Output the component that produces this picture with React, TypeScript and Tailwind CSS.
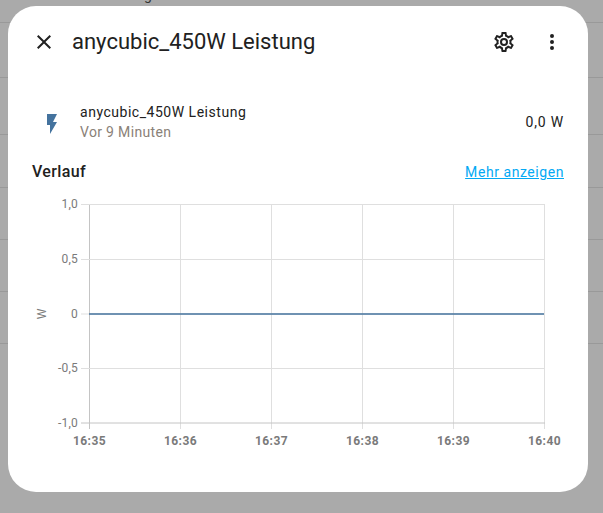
const closePath =
  "M19,6.41L17.59,5L12,10.59L6.41,5L5,6.41L10.59,12L5,17.59L6.41,19L12,13.41L17.59,19L19,17.59L13.41,12L19,6.41Z";
const cogPath =
  "M12,8A4,4 0 0,1 16,12A4,4 0 0,1 12,16A4,4 0 0,1 8,12A4,4 0 0,1 12,8M12,10A2,2 0 0,0 10,12A2,2 0 0,0 12,14A2,2 0 0,0 14,12A2,2 0 0,0 12,10M10,22C9.75,22 9.54,21.82 9.5,21.58L9.13,18.93C8.5,18.68 7.96,18.34 7.44,17.94L4.95,18.95C4.73,19.03 4.46,18.95 4.34,18.73L2.34,15.27C2.21,15.05 2.27,14.78 2.46,14.63L4.57,12.97L4.5,12L4.57,11L2.46,9.37C2.27,9.22 2.21,8.95 2.34,8.73L4.34,5.27C4.46,5.05 4.73,4.96 4.95,5.05L7.44,6.05C7.96,5.66 8.5,5.32 9.13,5.07L9.5,2.42C9.54,2.18 9.75,2 10,2H14C14.25,2 14.46,2.18 14.5,2.42L14.87,5.07C15.5,5.32 16.04,5.66 16.56,6.05L19.05,5.05C19.27,4.96 19.54,5.05 19.66,5.27L21.66,8.73C21.79,8.95 21.73,9.22 21.54,9.37L19.43,11L19.5,12L19.43,13L21.54,14.63C21.73,14.78 21.79,15.05 21.66,15.27L19.66,18.73C19.54,18.95 19.27,19.04 19.05,18.95L16.56,17.95C16.04,18.34 15.5,18.68 14.87,18.93L14.5,21.58C14.46,21.82 14.25,22 14,22H10M11.25,4L10.88,6.61C9.68,6.86 8.62,7.5 7.85,8.39L5.44,7.35L4.69,8.65L6.8,10.2C6.4,11.37 6.4,12.64 6.8,13.8L4.68,15.36L5.43,16.66L7.86,15.62C8.63,16.5 9.68,17.14 10.87,17.38L11.24,20H12.76L13.13,17.39C14.32,17.14 15.37,16.5 16.14,15.62L18.57,16.66L19.32,15.36L17.2,13.81C17.6,12.64 17.6,11.37 17.2,10.2L19.31,8.65L18.56,7.35L16.15,8.39C15.38,7.5 14.32,6.86 13.12,6.62L12.75,4H11.25Z";
const dotsPath =
  "M12,16A2,2 0 0,1 14,18A2,2 0 0,1 12,20A2,2 0 0,1 10,18A2,2 0 0,1 12,16M12,10A2,2 0 0,1 14,12A2,2 0 0,1 12,14A2,2 0 0,1 10,12A2,2 0 0,1 12,10M12,4A2,2 0 0,1 14,6A2,2 0 0,1 12,8A2,2 0 0,1 10,6A2,2 0 0,1 12,4Z";
const flashPath = "M7,2V13H10V22L17,10H13L17,2H7Z";

function Icon({ d, className }: { d: string; className?: string }) {
  return (
    <svg viewBox="0 0 24 24" className={`w-6 h-6 shrink-0 ${className ?? ""}`} fill="currentColor">
      <path d={d} />
    </svg>
  );
}

const rowHeights = [23, 55, 57, 53, 52, 52, 52];
const xTicks = [
  { x: 89.5, label: "16:35" },
  { x: 180.5, label: "16:36" },
  { x: 271.5, label: "16:37" },
  { x: 362.5, label: "16:38" },
  { x: 453.5, label: "16:39" },
  { x: 544.5, label: "16:40" },
];
const yTicks = [
  { y: 204.5, label: "1,0" },
  { y: 259.5, label: "0,5" },
  { y: 314, label: "0" },
  { y: 368.5, label: "-0,5" },
  { y: 423, label: "-1,0" },
];

// coordinates in the chart are page coordinates, viewBox shifted by the dialog origin
function HistoryChart() {
  return (
    <svg viewBox="8 190 580 270" className="block w-[580px] h-[270px]" style={{ fontFamily: "Roboto, sans-serif" }}>
      {xTicks.map((t, i) => (
        <g key={t.label}>
          <line x1={t.x} x2={t.x} y1={204} y2={429} stroke={i === 0 ? "#c4c4c4" : "#dfdfdf"} />
          <text x={t.x} y={445} textAnchor="middle" fontSize={12} fontWeight={700} fill="#7a7a7a" letterSpacing={0.4}>
            {t.label}
          </text>
        </g>
      ))}
      {yTicks.map((t, i) => (
        <g key={t.label}>
          <line x1={81} x2={545} y1={t.y} y2={t.y} stroke={i === 4 ? "#c4c4c4" : "#dfdfdf"} />
          <text x={78} y={t.y + 3.5} textAnchor="end" fontSize={12} fill="#7a7a7a" letterSpacing={0.2}>
            {t.label}
          </text>
        </g>
      ))}
      <line x1={89} x2={544} y1={314} y2={314} stroke="#44739e" strokeWidth={1.5} />
      <text transform="translate(46 314) rotate(-90)" textAnchor="middle" fontSize={12} fill="#7a7a7a">
        W
      </text>
    </svg>
  );
}

export default function App() {
  return (
    <div className="relative w-[603px] h-[513px] overflow-hidden bg-[#aaaaaa] font-['Roboto',sans-serif]">
      {/* page behind the dialog */}
      <div className="flex flex-col">
        {rowHeights.map((h, i) => (
          <div key={i} style={{ height: h }} className="border-b border-[#999999]" />
        ))}
      </div>
      <span className="absolute left-[144px] top-[-15px] text-[14px] leading-[20px] text-[#333333]">g</span>

      {/* dialog */}
      <div className="absolute left-2 top-[6px] w-[580px] h-[486px] rounded-[28px] bg-white text-[#212121]">
        <header className="flex items-center h-[72px] pl-6 pr-6">
          <Icon d={closePath} />
          <h2 className="ml-4 flex-1 text-[22px] leading-7 whitespace-nowrap">anycubic_450W Leistung</h2>
          <Icon d={cogPath} />
          <Icon d={dotsPath} className="ml-6" />
        </header>

        <div className="flex items-center h-[52px] mt-[18px] pl-8 pr-6">
          <Icon d={flashPath} className="text-[#44739e] mt-1" />
          <div className="ml-4 flex-1">
            <div className="text-[14px] leading-5 tracking-[0.52px]">anycubic_450W Leistung</div>
            <div className="text-[14px] leading-5 tracking-[0.33px] text-[#8a8178]">Vor 9 Minuten</div>
          </div>
          <div className="text-[14px] tracking-[0.8px]">0,0 W</div>
        </div>

        <div className="flex items-center justify-between h-6 mt-3 pl-6 pr-6">
          <span className="text-[16px] font-medium tracking-[0.35px]">Verlauf</span>
          <a className="text-[14px] tracking-[0.56px] text-[#03a9f4] underline">Mehr anzeigen</a>
        </div>

        <div className="mt-[6px]">
          <HistoryChart />
        </div>
      </div>
    </div>
  );
}
